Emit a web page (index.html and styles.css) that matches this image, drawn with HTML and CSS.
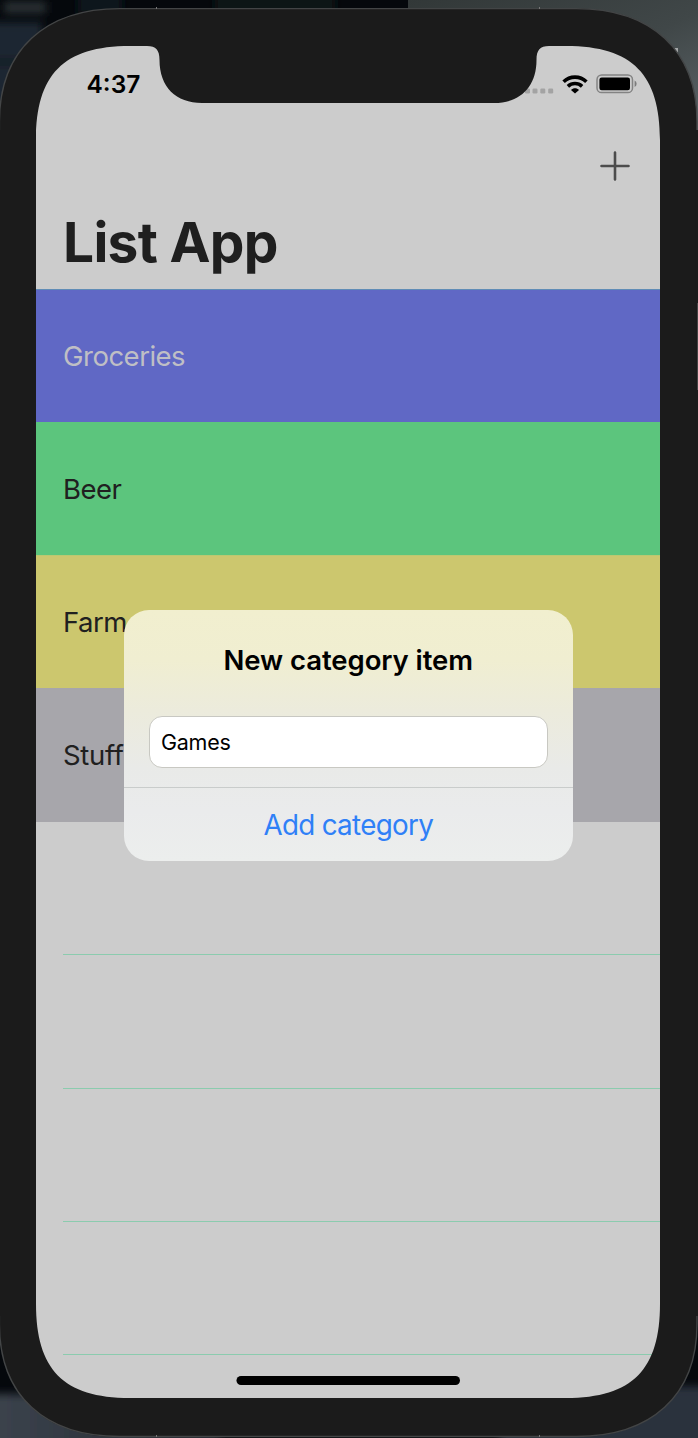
FILE: index.html
```html
<!DOCTYPE html>
<html lang="en">
<head>
<meta charset="utf-8">
<title>List App</title>
<link rel="stylesheet" href="styles.css">
</head>
<body>
<div class="stage">
  <svg class="wallpaper" viewBox="0 0 698 1438" aria-hidden="true">
    <defs>
      <linearGradient id="slate" x1="0" y1="0" x2="1" y2="1">
        <stop offset="0" stop-color="#323838"/><stop offset=".55" stop-color="#404748"/><stop offset="1" stop-color="#5b6367"/>
      </linearGradient>
      <linearGradient id="floor" x1="0" y1="0" x2="1" y2="0">
        <stop offset="0" stop-color="#3d454f"/><stop offset="1" stop-color="#22262e"/>
      </linearGradient>
      <filter id="soft"><feGaussianBlur stdDeviation="4"/></filter>
    </defs>
    <rect width="698" height="1438" fill="#05080c"/>
    <g filter="url(#soft)">
      <rect x="-20" y="22" width="62" height="90" fill="#1d2631"/>
      <rect x="4" y="2" width="42" height="11" fill="#2a3036"/>
      <rect x="-10" y="60" width="40" height="4" fill="#080d18"/>
      <rect x="78" y="-10" width="44" height="24" fill="#10161b"/>
      <rect x="215" y="-10" width="120" height="24" fill="#0e1418"/>
      <rect x="-20" y="1394" width="240" height="60" fill="url(#floor)"/>
      <rect x="500" y="1386" width="220" height="70" fill="#2a323d"/>
    </g>
    <rect x="408" y="0" width="290" height="130" fill="url(#slate)"/>
    <rect x="673" y="48" width="5" height="12" fill="#a4a7a8"/>
  </svg>

  <main class="screen">
    <header class="header">
      <div class="status">
        <span class="time">4:37</span>
        <span class="indicators">
          <svg class="dots" viewBox="0 0 30 6"><g fill="#a3a3a3"><rect x="0" y=".5" width="5" height="5" rx="1.3"/><rect x="7.5" y=".5" width="5" height="5" rx="1.3"/><rect x="15.3" y=".5" width="5" height="5" rx="1.3"/><rect x="23.2" y=".5" width="5" height="5" rx="1.3"/></g></svg>
          <svg class="wifi" viewBox="0 0 26 19" fill="none" stroke="#000">
            <path d="M1.6 6.8C8 .6 18 .6 24.4 6.8" stroke-width="3.6"/>
            <path d="M5.9 11.4C10 7.6 16 7.6 20.1 11.4" stroke-width="3.6"/>
            <path d="M13 18.6L9 14.9C11.2 12.8 14.8 12.8 17 14.9Z" fill="#000" stroke="none"/>
          </svg>
          <svg class="battery" viewBox="0 0 42 20">
            <rect x="1" y="1" width="35.5" height="17.6" rx="4.7" fill="none" stroke="#838383" stroke-width="1.5"/>
            <rect x="3.4" y="3.5" width="30.6" height="12.8" rx="2.3"/>
            <path d="M38.6 6.5Q40.6 7.5 40.6 9.7T38.6 13Z" fill="#7c7c7c"/>
          </svg>
        </span>
      </div>
      <div class="toolbar">
        <svg class="plus" viewBox="0 0 30 30"><path d="M15 1.5V28.5M1.5 15H28.5" stroke="#4c4c4c" stroke-width="2.6" stroke-linecap="round"/></svg>
      </div>
      <h1 class="title">List App</h1>
    </header>
    <ul class="list">
      <li class="row groceries"><span>Groceries</span></li>
      <li class="row beer"><span>Beer</span></li>
      <li class="row farm"><span>Farm</span></li>
      <li class="row stuff"><span>Stuff</span></li>
      <li class="row first-empty"></li>
      <li class="row empty"></li>
      <li class="row empty"></li>
      <li class="row empty"></li>
      <li class="row empty"></li>
    </ul>
  </main>

  <svg class="bezel" viewBox="0 0 698 1438" aria-hidden="true">
    <path fill="#1b1b1b" fill-rule="evenodd" d="M-.6 122C-.6 50 45 8.600 120 8.600H576C651 8.600 697 50 697 122V1324C697 1396 651 1437 576 1437H120C45 1437-.6 1396-.6 1324Z
      M36 140V1304C36 1369 63 1398 130 1398H566C633 1398 660 1369 660 1304V140C660 75 633 46 566 46H549C540 46 536.500 50 536.500 60C536.500 87 520 103 494 103H202C176 103 159.500 87 159.500 60C159.500 50 156 46 147 46H130C63 46 36 75 36 140Z"/>
    <path fill="none" stroke="#434546" stroke-width="1.4" d="M-.6 122C-.6 50 45 8.600 120 8.600H576C651 8.600 697 50 697 122V1324C697 1396 651 1436.500 576 1436.500H120C45 1436.500-.6 1396-.6 1324Z"/>
    <path d="M0 130V1316" stroke="#1b1b1b" stroke-width="4"/>
    <path d="M697 130V1316" stroke="#1b1b1b" stroke-width="3"/>
    <path d="M697.500 303V390" stroke="#444" stroke-width="1"/>
    <path d="M156.500 7V9M539.500 7V9M156.500 1435V1437M539.500 1435V1437" stroke="#777"/>
    <rect x="236.500" y="1376" width="223.500" height="9" rx="4.500"/>
  </svg>

  <section class="alert" role="dialog" aria-label="New category item">
    <div class="alert-body">
      <h2 class="alert-title"><span>New category item</span></h2>
      <div class="field"><span>Games</span></div>
    </div>
    <div class="action"><span>Add category</span></div>
  </section>
</div>
</body>
</html>
```

FILE: styles.css
```css
* { box-sizing: border-box; }
body { margin: 0; font-family: Inter, Roboto, sans-serif; background: #05080c; overflow: hidden; }
.stage { position: relative; width: 698px; height: 1438px; padding: 46px 38px 40px 36px; overflow: hidden; }
.wallpaper, .bezel { position: absolute; top: 0; left: 0; width: 698px; height: 1438px; }

.screen { position: relative; height: 1352px; background: #cccccc; border-radius: 60px; overflow: hidden; }
.header { height: 243px; }
.status { display: flex; justify-content: space-between; align-items: center; height: 76px; padding: 0 22px 0 50.5px; }
.time { font-size: 24.5px; font-weight: 600; line-height: 30px; }
.indicators { display: flex; align-items: center; }
.dots { width: 30px; height: 6px; margin: 13px 7px 0 0; }
.wifi { width: 26px; height: 19px; margin-right: 8px; }
.battery { width: 42px; height: 20px; }
.toolbar { display: flex; justify-content: flex-end; height: 88px; padding: 29px 30px 0 0; }
.plus { width: 30px; height: 30px; }
.title { margin: 0; padding-left: 27px; font-size: 55px; line-height: 65px; font-weight: 700; letter-spacing: -0.7px; color: #1f1f1f; }

.list { margin: 0; padding: 0; list-style: none; }
.row { display: flex; align-items: center; height: 133.1px; padding-left: 27px; font-size: 27.5px; letter-spacing: -0.5px; color: #202020; }
.groceries { background: #6068c5; border-top: 1px solid #608cb6; color: #bfbfc5; }
.beer { background: #5cc57d; }
.farm { background: #ccc76e; border-top: 1px solid #bbc870; }
.stuff { height: 133.6px; background: #a7a6ab; letter-spacing: -0.3px; }
.first-empty { height: 132.6px; }
.empty { margin-left: 27px; border-top: 1px solid #8bcbae; }

.alert { position: absolute; left: 123.5px; top: 610px; width: 449.5px; height: 251px; border-radius: 25px; overflow: hidden; background: linear-gradient(#f1efcf 0, #f0eed1 20%, #ecebdc 40%, #e9eae8 63%, #eaebec 80%, #eceeed 100%); }
.alert-body { height: 177px; padding: 30px 25px 0 25px; }
.alert-title { margin: 0; height: 76px; text-align: center; font-size: 27.5px; line-height: 40px; font-weight: 600; letter-spacing: -0.06px; }
.field { display: flex; align-items: center; height: 52px; padding-left: 11.5px; background: #fff; border: 1px solid #c8c8c2; border-radius: 13px; font-size: 21.5px; letter-spacing: -0.25px; }
.action { height: 74px; border-top: 1px solid #c9cccb; text-align: center; font-size: 27.8px; line-height: 75px; letter-spacing: -0.7px; color: #2f80f7; }
```
